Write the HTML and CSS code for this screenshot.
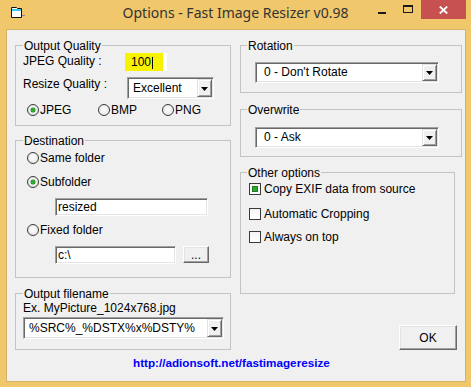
FILE: index.html
```html
<!DOCTYPE html>
<html>
<head>
<meta charset="utf-8">
<title>Options - Fast Image Resizer v0.98</title>
<link rel="stylesheet" href="styles.css">
</head>
<body>
<div class="titlebar">
  <div class="tb-left">
    <svg class="appicon" width="14" height="12" viewBox="0 0 14 12">
      <polygon points="0.5,0.5 5.5,0.5 6.5,1.5 10.5,1.5 10.5,10.5 0.5,10.5" fill="#fff" stroke="#111" stroke-width="1"/>
      <rect x="1" y="2" width="9" height="2" fill="#3cc8f0"/>
      <rect x="11" y="8" width="3" height="1" fill="#8a8a8a"/>
    </svg>
  </div>
  <div class="title">Options - Fast Image Resizer v0.98</div>
  <div class="caps">
    <div class="cap cap-min"><i></i></div>
    <div class="cap cap-max"><i></i></div>
    <div class="cap cap-close">
      <svg width="9" height="8" viewBox="0 0 9 8"><path d="M0.8 0.5 L8.2 7.5 M8.2 0.5 L0.8 7.5" stroke="#fff" stroke-width="1.8"/></svg>
    </div>
  </div>
</div>
<div class="client">
  <div class="cols">
    <div class="col-left">
      <div class="group g-quality">
        <span class="legend">Output Quality</span>
        <div class="row-jpeg">
          <span class="lbl lbl-jpeg">JPEG Quality :</span>
          <span class="hl-field"><span class="hl-text">100</span><span class="caret"></span></span>
        </div>
        <div class="row-resize">
          <span class="lbl lbl-resize">Resize Quality :</span>
          <div class="combo combo-excellent">
            <span class="combo-text">Excellent</span>
            <span class="combo-btn"><svg width="7" height="4" viewBox="0 0 7 4"><polygon points="0,0 7,0 3.5,4" fill="#000"/></svg></span>
          </div>
        </div>
        <div class="radios">
          <div class="radio r-w1"><span class="dot on"></span>JPEG</div>
          <div class="radio r-w2"><span class="dot"></span>BMP</div>
          <div class="radio"><span class="dot"></span>PNG</div>
        </div>
      </div>

      <div class="group g-dest">
        <span class="legend">Destination</span>
        <div class="radio d-row1"><span class="dot"></span>Same folder</div>
        <div class="radio d-row2"><span class="dot on"></span>Subfolder</div>
        <div class="edit e-resized">resized</div>
        <div class="radio d-row3"><span class="dot"></span>Fixed folder</div>
        <div class="fixed-row">
          <div class="edit e-fixed">c:\</div>
          <div class="btn btn-browse">...</div>
        </div>
      </div>

      <div class="group g-out">
        <span class="legend">Output filename</span>
        <div class="example">Ex. MyPicture_1024x768.jpg</div>
        <div class="combo combo-out">
          <span class="combo-text">%SRC%_%DSTX%x%DSTY%</span>
          <span class="combo-btn"><svg width="7" height="4" viewBox="0 0 7 4"><polygon points="0,0 7,0 3.5,4" fill="#000"/></svg></span>
        </div>
      </div>
    </div>

    <div class="col-right">
      <div class="group g-rot">
        <span class="legend legend-r">Rotation</span>
        <div class="combo combo-wide c-rot">
          <span class="combo-text">0 - Don't Rotate</span>
          <span class="combo-btn"><svg width="7" height="4" viewBox="0 0 7 4"><polygon points="0,0 7,0 3.5,4" fill="#000"/></svg></span>
        </div>
      </div>
      <div class="group g-over">
        <span class="legend legend-r">Overwrite</span>
        <div class="combo combo-wide c-over">
          <span class="combo-text">0 - Ask</span>
          <span class="combo-btn"><svg width="7" height="4" viewBox="0 0 7 4"><polygon points="0,0 7,0 3.5,4" fill="#000"/></svg></span>
        </div>
      </div>
      <div class="group g-other">
        <span class="legend legend-r">Other options</span>
        <div class="check c-row1"><span class="box on"></span>Copy EXIF data from source</div>
        <div class="check c-row2"><span class="box"></span>Automatic Cropping</div>
        <div class="check c-row3"><span class="box"></span>Always on top</div>
      </div>
      <div class="btn btn-ok">OK</div>
    </div>
  </div>
  <div class="footer"><span class="link">http://adionsoft.net/fastimageresize</span></div>
</div>
</body>
</html>
```
FILE: styles.css
```css
html, body {
  margin: 0;
  padding: 0;
}
body {
  width: 471px;
  height: 387px;
  overflow: hidden;
  background: #f0c76b;
  font-family: "Liberation Sans", Arial, sans-serif;
  font-size: 12px;
  color: #000;
}

/* title bar */
.titlebar {
  display: grid;
  grid-template-columns: 1fr auto 1fr;
  height: 29px;
}
.appicon {
  display: block;
  margin: 7px 0 0 11px;
}
.title {
  font-family: "Noto Sans", sans-serif;
  font-size: 14px;
  line-height: 19px;
  padding-top: 3px;
  color: #333;
  white-space: nowrap;
}
.caps {
  justify-self: end;
  display: flex;
  margin-right: 5px;
  height: 19px;
}
.cap {
  width: 26px;
  height: 19px;
}
.cap-min i {
  display: block;
  width: 8px;
  height: 2px;
  background: #1a1a1a;
  margin: 12px 0 0 9px;
}
.cap-max i {
  display: block;
  box-sizing: border-box;
  width: 10px;
  height: 8px;
  border: 1px solid #1a1a1a;
  border-top-width: 2px;
  margin: 5px 0 0 8px;
}
.cap-close {
  width: 45px;
  background: #c75050;
  display: flex;
  align-items: center;
  justify-content: center;
}
.cap-close svg {
  display: block;
}

/* client area */
.client {
  margin-left: 6px;
  width: 460px;
  height: 353px;
  box-sizing: border-box;
  border: 1px solid #d6b264;
  background: #f0f0f0;
  padding: 15px 0 0 8px;
}
.cols {
  display: flex;
  align-items: flex-start;
}
.col-left {
  width: 216px;
  display: flex;
  flex-direction: column;
}
.col-right {
  width: 222px;
  margin-left: 9px;
  display: flex;
  flex-direction: column;
}

/* group boxes */
.group {
  position: relative;
  box-sizing: border-box;
  border: 1px solid #c3c3c3;
}
.legend {
  position: absolute;
  top: -7px;
  left: 7px;
  padding: 0 1px;
  background: #f0f0f0;
  line-height: 14px;
  white-space: nowrap;
}
.legend-r {
  left: 6px;
}
.g-quality { height: 81px; }
.g-dest { height: 138px; margin-top: 14px; }
.g-out { height: 57px; margin-top: 15px; }
.g-rot { height: 48px; }
.g-over { height: 48px; margin-top: 16px; }
.g-other { width: 215px; height: 122px; margin-top: 15px; }

.lbl {
  display: block;
  box-sizing: border-box;
  padding-left: 7px;
  line-height: 14px;
  white-space: nowrap;
}

/* output quality */
.row-jpeg {
  display: flex;
  height: 18px;
  margin-top: 7px;
}
.lbl-jpeg {
  width: 109px;
  margin-top: 1px;
}
.hl-field {
  display: flex;
  align-items: center;
  width: 42px;
  height: 18px;
  background: linear-gradient(to right, #f6f200 0 38px, #ffffff 38px);
}
.hl-text {
  padding-left: 6px;
  line-height: 18px;
}
.caret {
  display: block;
  width: 1px;
  height: 12px;
  background: #000;
  margin-left: 1px;
  margin-top: 1px;
}
.row-resize {
  display: flex;
  height: 22px;
  margin-top: 6px;
}
.lbl-resize {
  width: 111px;
}

/* combo boxes */
.combo {
  display: flex;
  box-sizing: border-box;
  border: 1px solid;
  border-color: #a0a0a0 #ffffff #ffffff #a0a0a0;
  box-shadow: inset 1px 1px #696969, inset -1px -1px #e3e3e3;
  background: #fff;
  padding: 1px;
}
.combo-text {
  flex: 1;
  padding-left: 4px;
  white-space: nowrap;
  overflow: hidden;
}
.combo-btn {
  width: 15px;
  box-sizing: border-box;
  border: 1px solid;
  border-color: #e3e3e3 #696969 #696969 #e3e3e3;
  box-shadow: inset 1px 1px #ffffff, inset -1px -1px #a0a0a0;
  background: #f0f0f0;
  display: flex;
  align-items: center;
  justify-content: center;
}
.combo-btn svg {
  display: block;
  margin-top: 1px;
}
.combo-excellent {
  width: 87px;
  height: 22px;
  line-height: 18px;
}
.combo-out {
  width: 201px;
  height: 22px;
  line-height: 18px;
  margin: 2px 0 0 7px;
}
.combo-wide {
  width: 184px;
  height: 21px;
  line-height: 17px;
  margin-left: 14px;
}
.combo-wide .combo-text {
  padding-left: 7px;
}
.c-rot { margin-top: 16px; }
.c-over { margin-top: 17px; }

/* radios */
.radios {
  display: flex;
  margin: 4px 0 0 11px;
}
.radio {
  display: flex;
  align-items: center;
  height: 14px;
  line-height: 14px;
  white-space: nowrap;
}
.r-w1 { width: 71px; }
.r-w2 { width: 64px; }
.dot {
  position: relative;
  width: 12px;
  height: 12px;
  box-sizing: border-box;
  border: 1px solid #3a3a3a;
  border-radius: 50%;
  background: radial-gradient(circle at 50% 45%, #ffffff 0, #f2f2f2 40%, #dcdcdc 100%);
  margin-right: 1px;
  flex: none;
}
.dot.on::after {
  content: "";
  position: absolute;
  left: 3px;
  top: 3px;
  width: 4px;
  height: 4px;
  border-radius: 50%;
  background: #34a834;
  box-shadow: 0 0 0 0.5px #1f8a1f;
}

/* destination */
.d-row1 { margin: 10px 0 0 11px; }
.d-row2 { margin: 10px 0 0 11px; }
.d-row3 { margin: 7px 0 0 11px; }
.edit {
  box-sizing: border-box;
  height: 18px;
  border: 1px solid;
  border-color: #a0a0a0 #ffffff #ffffff #a0a0a0;
  box-shadow: inset 1px 1px #696969, inset -1px -1px #e3e3e3;
  background: #fff;
  padding-left: 2px;
  line-height: 16px;
  white-space: nowrap;
}
.e-resized {
  width: 153px;
  margin: 9px 0 0 39px;
}
.fixed-row {
  display: flex;
  margin: 9px 0 0 39px;
}
.e-fixed {
  width: 121px;
}
.btn {
  box-sizing: border-box;
  border: 1px solid;
  border-color: #ffffff #696969 #696969 #ffffff;
  box-shadow: inset -1px -1px #a0a0a0, inset 1px 1px #e3e3e3;
  background: #f0f0f0;
  display: flex;
  align-items: center;
  justify-content: center;
}
.btn-browse {
  width: 26px;
  height: 17px;
  margin-left: 7px;
  line-height: 14px;
  padding-top: 1px;
}
.btn-ok {
  width: 58px;
  height: 25px;
  margin: 31px 0 0 159px;
  line-height: 14px;
}

/* output filename */
.example {
  margin: 7px 0 0 7px;
  line-height: 14px;
  white-space: nowrap;
}

/* checkboxes */
.check {
  display: flex;
  align-items: center;
  height: 14px;
  line-height: 14px;
  margin-left: 8px;
  white-space: nowrap;
}
.c-row1 { margin-top: 9px; }
.c-row2 { margin-top: 11px; }
.c-row3 { margin-top: 9px; }
.box {
  position: relative;
  flex: none;
  width: 12px;
  height: 12px;
  box-sizing: border-box;
  border: 1px solid #3a3a3a;
  background: linear-gradient(#f4f4f4, #ffffff);
  margin-right: 3px;
}
.box.on::after {
  content: "";
  position: absolute;
  left: 2px;
  top: 2px;
  width: 6px;
  height: 6px;
  box-sizing: border-box;
  border: 1px solid #1f7f1f;
  background: #34a434;
}

/* footer link */
.footer {
  margin-top: 6px;
  padding-left: 118px;
  line-height: 14px;
}
.link {
  font-weight: bold;
  font-style: normal;
  font-size: 11.7px;
  color: #0000ff;
  white-space: nowrap;
}
```
